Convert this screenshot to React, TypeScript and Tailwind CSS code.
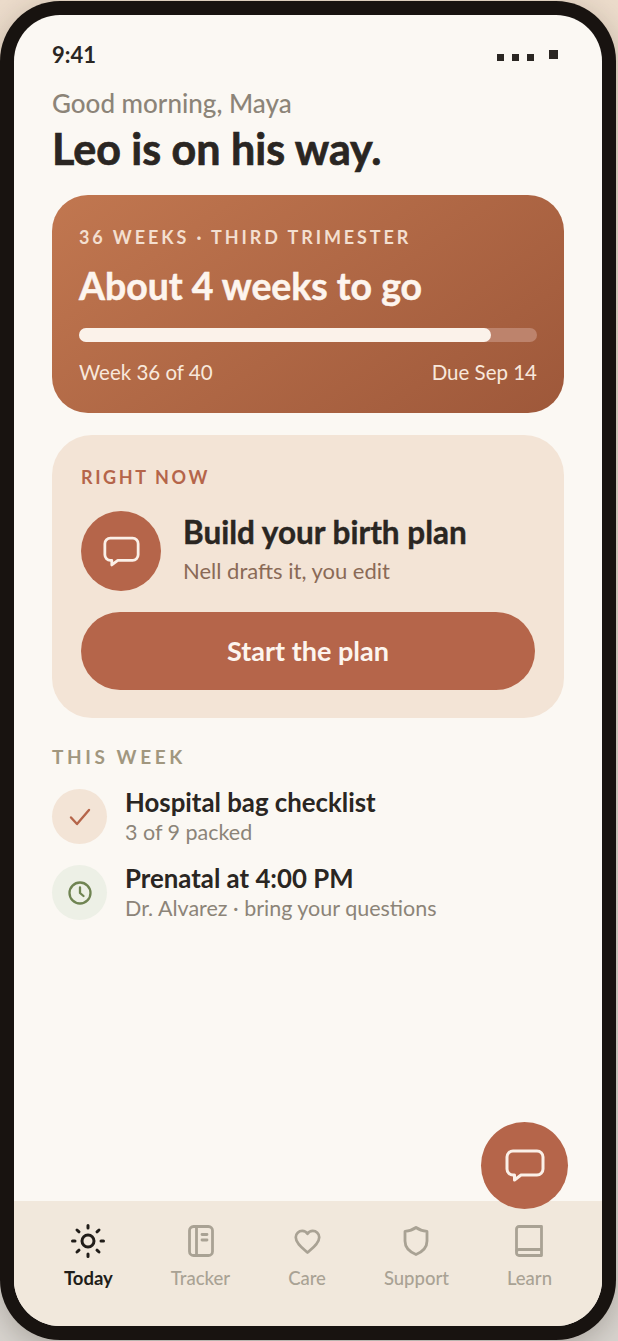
const font = "font-['Lato','Noto_Sans',sans-serif]";

function ChatIcon({ className }: { className: string }) {
    return (
        <svg viewBox="0 0 40 33" fill="none" className={className} stroke="#fbf0e8" strokeWidth="3" strokeLinejoin="round" strokeLinecap="round">
            <path d="M8 2h24a6 6 0 0 1 6 6v12a6 6 0 0 1-6 6H16l-6.500 5V26H8a6 6 0 0 1-6-6V8a6 6 0 0 1 6-6z" />
        </svg>
    );
}

function SunIcon() {
    return (
        <svg viewBox="0 0 34 34" fill="none" stroke="#211d19" strokeWidth="3" strokeLinecap="round" className="w-[34px] h-[34px]">
            <circle cx="17" cy="17" r="6" />
            <path d="M17 1.500v2.500M17 30v2.500M1.500 17H4M30 17h2.500M6 6l2 1.800M28 6l-2 1.800M6 28l2-1.800M28 28l-2-1.800" />
        </svg>
    );
}

function TrackerIcon() {
    return (
        <svg viewBox="0 0 26 32" fill="none" stroke="#a9a294" strokeWidth="2.800" strokeLinecap="round" className="w-[26px] h-[32px]">
            <rect x="1.500" y="1.500" width="23" height="29" rx="4" />
            <path d="M8.500 2v28M14 9.500h5M14 15h5" />
        </svg>
    );
}

function HeartIcon() {
    return (
        <svg viewBox="0 0 28 26" fill="none" stroke="#a9a294" strokeWidth="2.800" strokeLinejoin="round" className="w-[27px] h-[25px]">
            <path d="M14 24.500C9 20 1.800 15 1.800 8.500A6.700 6.700 0 0 1 8.500 2c2.300 0 4.300 1 5.500 3 1.200-2 3.200-3 5.500-3a6.700 6.700 0 0 1 6.700 6.500C26.200 15 19 20 14 24.500z" />
        </svg>
    );
}

function ShieldIcon() {
    return (
        <svg viewBox="0 0 26 30" fill="none" stroke="#a9a294" strokeWidth="2.800" strokeLinejoin="round" className="w-[26px] h-[30px]">
            <path d="M13 1.500c3 2.200 6.500 3.400 11 3.900V15c0 6.500-4.500 10.800-11 13.500C6.500 25.800 2 21.500 2 15V5.400c4.500-.5 8-1.700 11-3.900z" />
        </svg>
    );
}

function BookIcon() {
    return (
        <svg viewBox="0 0 28 32" fill="none" stroke="#a9a294" strokeWidth="2.800" strokeLinejoin="round" className="w-[28px] h-[32px]">
            <path d="M4 1.500h22.500v29H4A2.500 2.500 0 0 1 1.500 28V4A2.500 2.500 0 0 1 4 1.500z" />
            <path d="M1.500 26.500a2.500 2.500 0 0 1 2.500-2h22.500" />
        </svg>
    );
}

const tabs = [
    { label: "Today", icon: <SunIcon />, active: true },
    { label: "Tracker", icon: <TrackerIcon /> },
    { label: "Care", icon: <HeartIcon /> },
    { label: "Support", icon: <ShieldIcon /> },
    { label: "Learn", icon: <BookIcon /> },
];

export default function App() {
    return (
        <div className={`w-[618px] h-[1341px] overflow-hidden bg-gradient-to-b from-[#ecdccb] to-[#d9d5d0] pr-[2px] pt-px pb-px ${font}`}>
            <div className="h-full rounded-[60px] bg-[#181310] p-[14px] shadow-[0_8px_30px_rgba(40,30,20,0.25)]">
                <div className="relative h-full rounded-[46px] overflow-hidden bg-[#fbf8f3] flex flex-col">
                    <div className="flex-1 px-[38px] pt-[26px]">
                        <div className="flex items-center justify-between h-[28px]">
                            <span className="text-[22px] font-bold leading-none text-[#2a2622]">9:41</span>
                            <div className="flex items-start gap-[8px] pr-[6px] pt-px">
                                <span className="w-[7px] h-[7px] mt-[4px] bg-[#2a2622]"></span>
                                <span className="w-[7px] h-[7px] mt-[4px] bg-[#2a2622]"></span>
                                <span className="w-[7px] h-[7px] mt-[4px] bg-[#2a2622]"></span>
                                <span className="w-[9px] h-[9px] ml-[7px] bg-[#2a2622]"></span>
                            </div>
                        </div>
                        <p className="mt-[19px] text-[26px] leading-[30px] font-medium text-[#8c8478]">Good morning, Maya</p>
                        <h1 className="mt-[6px] text-[43px] leading-[50px] font-bold [-webkit-text-stroke:0.7px_#2a2622] text-[#2a2622]">Leo is on his way.</h1>

                        <div className="mt-[21px] h-[218px] rounded-[36px] bg-[linear-gradient(145deg,#c17750,#9e583a)] px-[27px] pt-[31px]">
                            <p className="text-[18px] leading-[22px] font-bold tracking-[2.900px] text-[#f3dfd0]">36 WEEKS · THIRD TRIMESTER</p>
                            <p className="mt-[16px] text-[37.400px] leading-[44px] font-bold [-webkit-text-stroke:0.5px_#fdf5ee] text-[#fdf5ee]">About 4 weeks to go</p>
                            <div className="mt-[20px] h-[14px] rounded-full bg-[#bd836c]">
                                <div className="h-full w-[90%] rounded-full bg-[#fbf2ea]"></div>
                            </div>
                            <div className="mt-[17px] flex justify-between text-[20.500px] leading-[26px] text-[#f8e8dc]">
                                <span>Week 36 of 40</span>
                                <span>Due Sep 14</span>
                            </div>
                        </div>

                        <div className="mt-[22px] h-[283px] rounded-[40px] bg-[#f3e4d6] px-[29px] pt-[31px]">
                            <p className="text-[18px] leading-[22px] font-bold tracking-[2.600px] text-[#b5654a]">RIGHT NOW</p>
                            <div className="mt-[23px] flex items-center gap-[22px]">
                                <div className="w-[80px] h-[80px] rounded-full bg-[#b5654a] flex items-center justify-center">
                                    <ChatIcon className="w-[37px] h-[31px]" />
                                </div>
                                <div className="pb-[6px]">
                                    <p className="text-[31.500px] leading-[40px] font-bold [-webkit-text-stroke:0.4px_#2a2622] text-[#2a2622]">Build your birth plan</p>
                                    <p className="mt-[5px] text-[22px] leading-[27px] text-[#8a6a56]">Nell drafts it, you edit</p>
                                </div>
                            </div>
                            <button className={`mt-[21px] w-[454px] h-[78px] rounded-full bg-[#b5654a] text-[27px] font-bold text-[#fdf5ee] ${font}`}>Start the plan</button>
                        </div>

                        <p className="mt-[28px] text-[19px] leading-[22px] font-bold tracking-[3.600px] text-[#a1977f]">THIS WEEK</p>
                        <div className="mt-[19px] flex flex-col gap-[17px]">
                            <div className="flex items-center gap-[18px]">
                                <div className="w-[55px] h-[55px] rounded-full bg-[#f3e4d6] flex items-center justify-center">
                                    <svg viewBox="0 0 22 18" fill="none" stroke="#b5654a" strokeWidth="2.400" strokeLinecap="round" strokeLinejoin="round" className="w-[22px] h-[18px]">
                                        <path d="M2 9.500l6 6.500L20 2" />
                                    </svg>
                                </div>
                                <div>
                                    <p className="text-[25.800px] leading-[30px] font-bold text-[#2a2622]">Hospital bag checklist</p>
                                    <p className="mt-px text-[21.500px] leading-[28px] text-[#8c8478]">3 of 9 packed</p>
                                </div>
                            </div>
                            <div className="flex items-center gap-[18px]">
                                <div className="w-[55px] h-[55px] rounded-full bg-[#edf0e6] flex items-center justify-center">
                                    <svg viewBox="0 0 24 24" fill="none" stroke="#6f8452" strokeWidth="2.300" strokeLinecap="round" strokeLinejoin="round" className="w-[24px] h-[24px]">
                                        <circle cx="12" cy="12" r="10.500" />
                                        <path d="M12 6.500V12l3.500 3" />
                                    </svg>
                                </div>
                                <div>
                                    <p className="text-[25.800px] leading-[30px] font-bold text-[#2a2622]">Prenatal at 4:00 PM</p>
                                    <p className="mt-px text-[21.500px] leading-[28px] text-[#8c8478]">Dr. Alvarez · bring your questions</p>
                                </div>
                            </div>
                        </div>
                    </div>

                    <div className="absolute right-[34px] bottom-[117px] z-10 w-[87px] h-[87px] rounded-full bg-[#b5654a] flex items-center justify-center">
                        <ChatIcon className="w-[40px] h-[33px]" />
                    </div>

                    <nav className="h-[125px] bg-[#f1e8dc] flex justify-between px-[50px] pt-[20px]">
                        {tabs.map(({ label, icon, active }) => (
                            <div key={label} className="flex flex-col items-center">
                                <div className="h-[40px] flex items-center justify-center">{icon}</div>
                                <span className={`mt-[5px] text-[18.500px] leading-[24px] ${active ? "font-bold text-[#211d19]" : "font-medium text-[#a9a294]"}`}>{label}</span>
                            </div>
                        ))}
                    </nav>
                </div>
            </div>
        </div>
    );
}
